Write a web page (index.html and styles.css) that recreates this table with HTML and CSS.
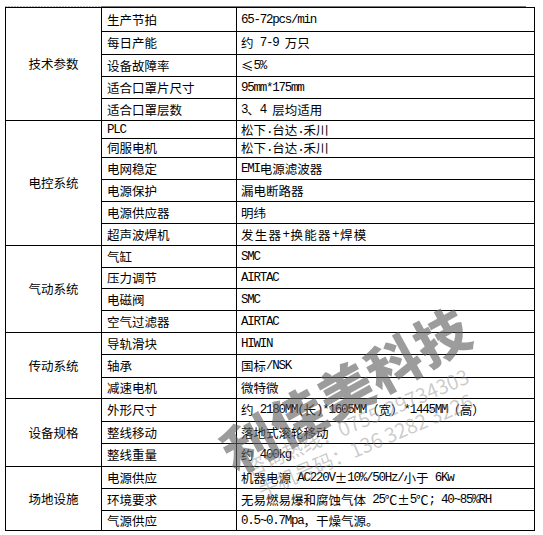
FILE: index.html
```html
<!DOCTYPE html>
<html lang="zh-CN">
<head>
<meta charset="utf-8">
<title>设备参数</title>
<link rel="stylesheet" href="styles.css">
</head>
<body>
<div class="rule"><span class="rule-dash"></span><span class="rule-solid"></span></div>
<div class="sheet">
  <div class="k" style="grid-row: span 5">技术参数</div>
  <div class="n">生产节拍</div><div class="v"><span class="m">65-72pcs/min</span></div>
  <div class="n">每日产能</div><div class="v">约<span class="m"> 7-9 </span>万只</div>
  <div class="n">设备故障率</div><div class="v">≤<span class="m">5%</span></div>
  <div class="n">适合口罩片尺寸</div><div class="v"><span class="m">95mm*175mm</span></div>
  <div class="n">适合口罩层数</div><div class="v"><span class="m">3</span>、<span class="m">4 </span>层均适用</div>

  <div class="k" style="grid-row: span 6">电控系统</div>
  <div class="n"><span class="m">PLC</span></div><div class="v">松下<span class="m">.</span>台达<span class="m">.</span>禾川</div>
  <div class="n">伺服电机</div><div class="v">松下<span class="m">.</span>台达<span class="m">.</span>禾川</div>
  <div class="n">电网稳定</div><div class="v"><span class="m">EMI</span>电源滤波器</div>
  <div class="n">电源保护</div><div class="v">漏电断路器</div>
  <div class="n">电源供应器</div><div class="v">明纬</div>
  <div class="n">超声波焊机</div><div class="v wide">发生器<span class="m">+</span>换能器<span class="m">+</span>焊模</div>

  <div class="k" style="grid-row: span 4">气动系统</div>
  <div class="n">气缸</div><div class="v"><span class="m">SMC</span></div>
  <div class="n">压力调节</div><div class="v"><span class="m">AIRTAC</span></div>
  <div class="n">电磁阀</div><div class="v"><span class="m">SMC</span></div>
  <div class="n">空气过滤器</div><div class="v"><span class="m">AIRTAC</span></div>

  <div class="k" style="grid-row: span 3">传动系统</div>
  <div class="n">导轨滑块</div><div class="v"><span class="m">HIWIN</span></div>
  <div class="n">轴承</div><div class="v">国标<span class="m">/NSK</span></div>
  <div class="n">减速电机</div><div class="v">微特微</div>

  <div class="k" style="grid-row: span 3">设备规格</div>
  <div class="n">外形尺寸</div><div class="v">约<span class="m"> 2180MM(</span>长<span class="m">)*1605MM</span>（宽）<span class="m">*1445MM</span>（高）</div>
  <div class="n">整线移动</div><div class="v">落地式滚轮移动</div>
  <div class="n">整线重量</div><div class="v">约<span class="m"> 400kg</span></div>

  <div class="k" style="grid-row: span 3">场地设施</div>
  <div class="n">电源供应</div><div class="v">机器电源<span class="m"> AC220V</span>±<span class="m">10%/50Hz/</span>小于<span class="m"> 6Kw</span></div>
  <div class="n">环境要求</div><div class="v">无易燃易爆和腐蚀气体<span class="m"> 25</span>℃±<span class="m">5</span>℃<span class="m">; 40~85%RH</span></div>
  <div class="n">气源供应</div><div class="v"><span class="m">0.5~0.7Mpa</span>，干燥气源。</div>
</div>

<div class="wm">
  <div class="wm-big">利佳美科技</div>
  <div class="wm-line wm-l1">咨询热线：0755-29734303</div>
  <div class="wm-line wm-l2">手机号码：136 3282 3226</div>
</div>
</body>
</html>
```
FILE: styles.css
```css
html, body {
  margin: 0;
  padding: 0;
  background: #fff;
}
body {
  padding: 6px 0 0 5px;
  font-family: "Noto Sans CJK SC", "Liberation Sans", sans-serif;
  font-size: 12.5px;
  color: #000;
  position: relative;
  width: 538px;
  height: 529px;
  overflow: hidden;
}
.rule {
  display: flex;
  width: 521px;
  height: 1px;
}
.rule-dash {
  width: 96px;
  background: repeating-linear-gradient(to right, #b4b4b4 0 2px, #e6e6e6 2px 3px);
}
.rule-solid {
  flex: 1;
  background: #7a7a7a;
}
.sheet {
  display: grid;
  grid-template-columns: 96px 135px 298px;
  grid-template-rows:
    24px 23px 22px 22px 22px
    18px 19px 22px 22px 22px 22px
    22px 21px 22px 22px
    22px 23px 21px
    23px 22px 23px
    22px 22px 20px;
  width: 529px;
  border-left: 1px solid #000;
  border-top: 1px solid #000;
}
.k, .n, .v {
  box-sizing: border-box;
  border-right: 1px solid #000;
  border-bottom: 1px solid #000;
  display: flex;
  align-items: center;
  white-space: nowrap;
  line-height: 14px;
}
.k {
  grid-column: 1;
  justify-content: center;
}
.n {
  grid-column: 2;
  padding-left: 5px;
}
.v {
  grid-column: 3;
  padding-left: 4px;
}
.v.wide {
  letter-spacing: 1.3px;
}
.m {
  font-family: "Liberation Mono", monospace;
  font-size: 12.5px;
  letter-spacing: -1.25px;
  white-space: pre;
}
.wide .m {
  letter-spacing: 0.6px;
}
.wm {
  position: absolute;
  left: 0;
  top: 0;
  width: 543px;
  height: 535px;
  pointer-events: none;
}
.wm-big {
  position: absolute;
  left: 207px;
  top: 360px;
  width: 280px;
  height: 54px;
  font-family: "Noto Sans CJK SC", sans-serif;
  font-weight: 900;
  font-size: 54px;
  line-height: 54px;
  letter-spacing: 1px;
  white-space: nowrap;
  color: rgba(95, 95, 95, 0.62);
  transform: rotate(-29deg);
  transform-origin: center;
}
.wm-line {
  position: absolute;
  width: 270px;
  height: 22px;
  font-family: "Noto Sans CJK SC", sans-serif;
  font-size: 20px;
  line-height: 22px;
  white-space: nowrap;
  text-align: center;
  color: rgba(140, 140, 140, 0.45);
  transform: rotate(-23deg);
  transform-origin: center;
}
.wm-l1 {
  left: 222px;
  top: 411px;
}
.wm-l2 {
  left: 230px;
  top: 434px;
}
```
